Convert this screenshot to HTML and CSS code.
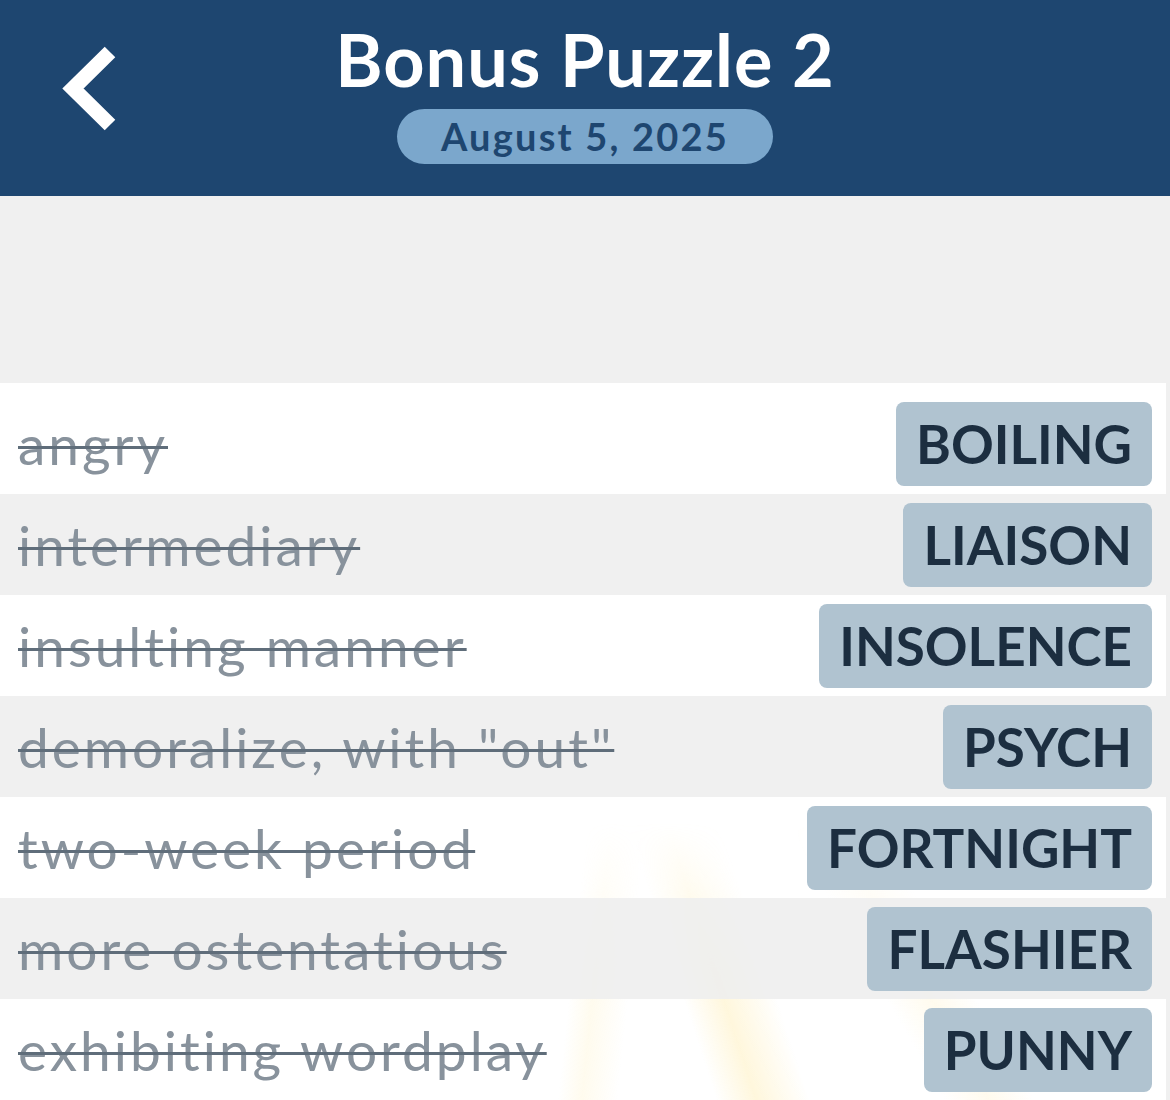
FILE: index.html
```html
<!DOCTYPE html>
<html>
<head>
    <title>Bonus Puzzle 2</title>
    <link rel="stylesheet" href="styles.css">
</head>
<body>
    <div class="header">
        <div class="back">
            <svg width="70" height="100" viewBox="50 40 70 100">
                <polyline points="110,54 73,90.5 110,127" fill="none" stroke="#fff" stroke-width="15" stroke-linejoin="miter"/>
            </svg>
        </div>
        <div class="title-box">
            <h1>Bonus Puzzle 2</h1>
            <div class="date">August 5, 2025</div>
        </div>
        <div></div>
    </div>
    <div class="spacer"></div>
    <div class="list">
        <div class="rays"></div>
        <div class="row"><span class="clue">angry</span><span class="answer">BOILING</span></div>
        <div class="row alt"><span class="clue">intermediary</span><span class="answer">LIAISON</span></div>
        <div class="row"><span class="clue">insulting manner</span><span class="answer">INSOLENCE</span></div>
        <div class="row alt"><span class="clue">demoralize, with "out"</span><span class="answer">PSYCH</span></div>
        <div class="row"><span class="clue">two-week period</span><span class="answer">FORTNIGHT</span></div>
        <div class="row alt"><span class="clue">more ostentatious</span><span class="answer">FLASHIER</span></div>
        <div class="row"><span class="clue">exhibiting wordplay</span><span class="answer">PUNNY</span></div>
    </div>
</body>
</html>
```
FILE: styles.css
```css
body {
    margin: 0;
    padding: 0;
    font-family: Lato, "Noto Sans", sans-serif;
    background: #f0f0f0;
    overflow: hidden;
}

.header {
    background: #1e4670;
    height: 196px;
    display: grid;
    grid-template-columns: 1fr auto 1fr;
    align-items: start;
}

.back {
    padding-left: 50px;
    padding-top: 38px;
}

.back svg {
    display: block;
}

.title-box {
    display: flex;
    flex-direction: column;
    align-items: center;
    padding-top: 18px;
}

h1 {
    margin: 0;
    color: #fff;
    font-size: 72px;
    font-weight: bold;
    letter-spacing: 1px;
    line-height: 1.15;
}

.date {
    margin-top: 8px;
    background: #7ba7cc;
    color: #1e4670;
    font-size: 38px;
    font-weight: bold;
    letter-spacing: 2.2px;
    height: 55px;
    line-height: 55px;
    width: 376px;
    text-align: center;
    border-radius: 28px;
}

.spacer {
    height: 187px;
}

.list {
    position: relative;
    background: #fff;
    padding-top: 10px;
    margin-right: 4px;
    overflow: hidden;
}

/* faint light rays behind the last rows */
.rays {
    position: absolute;
    left: 480px;
    top: 440px;
    width: 560px;
    height: 330px;
    background:
        linear-gradient(96deg, transparent 18%, rgba(255, 236, 170, 0.2) 22%, transparent 28%),
        linear-gradient(72deg, transparent 38%, rgba(255, 228, 140, 0.3) 44%, transparent 52%),
        linear-gradient(60deg, transparent 66%, rgba(255, 232, 160, 0.18) 72%, transparent 78%);
    -webkit-mask-image: linear-gradient(to bottom, transparent, #000 45%);
    mask-image: linear-gradient(to bottom, transparent, #000 45%);
    pointer-events: none;
}

.row {
    position: relative;
    height: 101px;
    display: flex;
    align-items: center;
    justify-content: space-between;
    padding: 0 14px 0 18px;
}

.row.alt {
    background: rgba(238, 238, 238, 0.88);
}

.clue {
    color: #88929c;
    font-size: 55px;
    letter-spacing: 3px;
    text-decoration: line-through;
    text-decoration-color: #5f6d7a;
    text-decoration-thickness: 3px;
}

.answer {
    background: #b0c3d0;
    color: #1c2e40;
    font-size: 53px;
    font-weight: bold;
    height: 84px;
    line-height: 84px;
    padding: 0 20px;
    border-radius: 8px;
}
```
